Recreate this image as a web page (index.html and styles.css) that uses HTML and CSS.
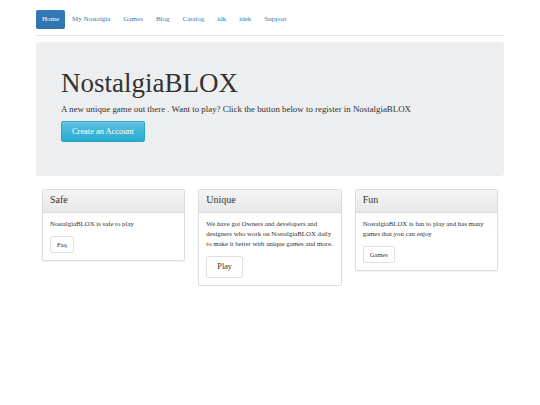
FILE: index.html
```html
<!DOCTYPE html>
<html lang="en">
  <head>
    <meta charset="UTF-8" />
    <meta name="viewport" content="width=device-width, initial-scale=1.0" />
    <title>NostalgiaBLOX</title>
    <link rel="stylesheet" href="styles.css">
  </head>
  <body>
    <div class="container">
      <header class="header">
        <ul class="nav-pills">
          <li class="active"><a href="#">Home</a></li>
          <li><a href="#">My Nostalgia</a></li>
          <li><a href="#">Games</a></li>
          <li><a href="#">Blog</a></li>
          <li><a href="#">Catalog</a></li>
          <li><a href="#">idk</a></li>
          <li><a href="#">idek</a></li>
          <li><a href="#">Support</a></li>
        </ul>
      </header>

      <section class="jumbotron">
        <h1>NostalgiaBLOX</h1>
        <p>A new unique game out there . Want to play? Click the button below to register in NostalgiaBLOX</p>
        <a class="btn btn-info" href="#">Create an Account</a>
      </section>

      <div class="row">
        <div class="panel">
          <div class="panel-heading"><h3 class="panel-title">Safe</h3></div>
          <div class="panel-body">
            <p>NostalgiaBLOX is safe to play</p>
            <a class="btn btn-default" href="#">Faq</a>
          </div>
        </div>
        <div class="panel">
          <div class="panel-heading"><h3 class="panel-title">Unique</h3></div>
          <div class="panel-body">
            <p>We have got Owners and developers and designers who work on NostalgiaBLOX daily to make it better with unique games and more.</p>
            <a class="btn btn-default btn-lg" href="#">Play</a>
          </div>
        </div>
        <div class="panel">
          <div class="panel-heading"><h3 class="panel-title">Fun</h3></div>
          <div class="panel-body">
            <p>NostalgiaBLOX is fun to play and has many games that you can enjoy</p>
            <a class="btn btn-default" href="#">Games</a>
          </div>
        </div>
      </div>
    </div>
  </body>
</html>
```

FILE: styles.css
```css
/* NostalgiaBLOX home */

body {
  font-family: "Liberation Serif", "Times New Roman", serif;
  font-size: 7px;
  line-height: 1.43;
  color: #333;
  margin: 0;
  background-color: #fff;
}

a {
  text-decoration: none;
}

.container {
  width: 468px;
  margin: 0 auto;
}

.header {
  padding-top: 10px;
  padding-bottom: 6px;
  border-bottom: 1px solid #e5e5e5;
}

.nav-pills {
  list-style: none;
  display: flex;
  gap: 1px;
  margin: 0;
  padding: 0;
}

.nav-pills a {
  display: block;
  padding: 0 6px;
  height: 19px;
  line-height: 19px;
  color: #337ab7;
  border-radius: 2px;
}

.nav-pills .active a {
  color: #fff;
  background-color: #337ab7;
  background-image: linear-gradient(to bottom, #337ab7 0, #2e73b0 100%);
}

.jumbotron {
  margin-top: 6px;
  padding: 27px 25px 34px;
  background-color: #eceef0;
  border-radius: 3px;
}

.jumbotron h1 {
  margin: 0;
  font-size: 27px;
  font-weight: normal;
  line-height: 1.1;
}

.jumbotron p {
  margin: 4px 0 6px;
  font-size: 8.87px;
  line-height: 1.4;
}

.btn {
  display: inline-block;
  border-radius: 2px;
  border: 1px solid #ccc;
  text-align: center;
}

.btn-info {
  padding: 4px 10px;
  font-size: 8.4px;
  line-height: 11px;
  color: #fff;
  border-color: #28a4c9;
  background-image: linear-gradient(to bottom, #5bc0de 0, #2aabd2 100%);
  box-shadow: inset 0 1px 0 rgba(255, 255, 255, 0.15);
}

.btn-default {
  padding: 3px 6px;
  font-size: 6.5px;
  line-height: 9px;
  color: #333;
  background-color: #fff;
  border-color: #e0e0e0;
}

.btn-lg {
  padding: 4px 10px;
  font-size: 8.2px;
  line-height: 12px;
}

.row {
  display: grid;
  grid-template-columns: repeat(3, 1fr);
  column-gap: 13px;
  align-items: start;
  margin-top: 13px;
  padding: 0 6px;
}

.panel {
  border: 1px solid #ddd;
  border-radius: 2px;
  background-color: #fff;
  box-shadow: 0 1px 1px rgba(0, 0, 0, 0.05);
}

.panel-heading {
  padding: 4px 7px 6px;
  border-bottom: 1px solid #ddd;
  background-image: linear-gradient(to bottom, #f5f5f5 0, #e8e8e8 100%);
}

.panel-title {
  margin: 0;
  font-size: 10px;
  font-weight: normal;
  line-height: 12px;
}

.panel-body {
  padding: 6px 7px 7px;
}

.panel-body p {
  margin: 0 0 7px;
  font-size: 6.8px;
  line-height: 10px;
}
```
